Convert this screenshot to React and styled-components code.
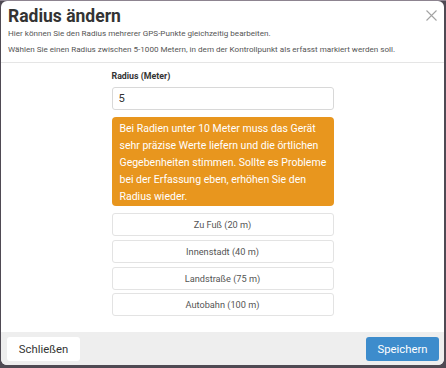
import React from 'react'
import styled, { createGlobalStyle } from 'styled-components'

const GlobalStyle = createGlobalStyle`
  html, body {
    margin: 0;
    padding: 0;
    background: #4f4a53;
  }
  body {
    font-family: Roboto, "Liberation Sans", sans-serif;
  }
`

const Backdrop = styled.div`
  width: 446px;
  height: 368px;
  box-sizing: border-box;
  padding: 1px 2px 3px 1px;
  background: linear-gradient(#8d8490 0 1px, #4f4a53 1px);
`

const Modal = styled.div`
  height: 100%;
  background: #fff;
  border-radius: 6px;
  overflow: hidden;
  display: flex;
  flex-direction: column;
`

const Header = styled.div`
  padding: 5px 7px 7px 7px;
  border-bottom: 1px solid #e5e5e5;
`

const TitleRow = styled.div`
  display: flex;
  justify-content: space-between;
  align-items: flex-start;
`

const Title = styled.h2`
  margin: 0;
  font-size: 17.5px;
  line-height: 21px;
  font-weight: 700;
  color: #333;
`

const Close = styled.button`
  border: 0;
  background: none;
  padding: 4px 0 0;
  color: #a3a3a3;
  cursor: pointer;
  display: flex;
`

const Hint = styled.p`
  margin: ${p => (p.first ? '1px 0 0' : '4px 0 0')};
  font-size: 8.1px;
  line-height: 11.5px;
  color: #555;
`

const Body = styled.div`
  flex: 1;
  display: flex;
  justify-content: center;
  padding-top: 7px;
`

const Column = styled.div`
  width: 222px;
  display: flex;
  flex-direction: column;
`

const Label = styled.label`
  font-size: 8.8px;
  line-height: 12.3px;
  font-weight: 700;
  color: #333;
  margin-bottom: 5px;
`

const Input = styled.input`
  box-sizing: border-box;
  height: 23px;
  border: 1px solid #d8d8d8;
  border-radius: 3px;
  padding: 0 6px;
  font-family: inherit;
  font-size: 11.2px;
  color: #333;
  margin: 0 0 7px;
  outline: none;
`

const Alert = styled.div`
  box-sizing: border-box;
  height: 89px;
  background: #e8961e;
  color: #fff;
  border-radius: 4px;
  padding: 3px 6px 2px 8px;
  font-size: 10.5px;
  line-height: 17px;
  white-space: nowrap;
  margin-bottom: 7px;
`

const Preset = styled.button`
  box-sizing: border-box;
  height: 23px;
  margin-bottom: 3.7px;
  background: #fff;
  border: 1px solid #e3e3e3;
  border-radius: 3px;
  font-family: inherit;
  font-size: 9.2px;
  color: #555;
  cursor: pointer;
`

const Footer = styled.div`
  height: 33px;
  box-sizing: border-box;
  background: #eeeeee;
  padding: 5px 5px 4px 6px;
  display: flex;
  justify-content: space-between;
`

const FooterButton = styled.button`
  height: 24px;
  width: 73px;
  padding: 0;
  border: 0;
  border-radius: 3px;
  font-family: inherit;
  font-size: 11.3px;
  background: ${p => (p.primary ? '#3d8ccc' : '#fff')};
  color: ${p => (p.primary ? '#fff' : '#333')};
  cursor: pointer;
`

const presets = ['Zu Fuß (20 m)', 'Innenstadt (40 m)', 'Landstraße (75 m)', 'Autobahn (100 m)']

const warning = [
  'Bei Radien unter 10 Meter muss das Gerät',
  'sehr präzise Werte liefern und die örtlichen',
  'Gegebenheiten stimmen. Sollte es Probleme',
  'bei der Erfassung eben, erhöhen Sie den',
  'Radius wieder.'
]

export default function App () {
  return (
    <>
      <GlobalStyle />
      <Backdrop>
        <Modal>
          <Header>
            <TitleRow>
              <Title>Radius ändern</Title>
              <Close aria-label='Schließen'>
                <svg width='11' height='11' viewBox='0 0 11 11' fill='none' stroke='currentColor' strokeWidth='1.1'>
                  <path d='M0.5 0.5L10.5 10.5M10.5 0.5L0.5 10.5' />
                </svg>
              </Close>
            </TitleRow>
            <Hint first>Hier können Sie den Radius mehrerer GPS-Punkte gleichzeitig bearbeiten.</Hint>
            <Hint>Wählen Sie einen Radius zwischen 5-1000 Metern, in dem der Kontrollpunkt als erfasst markiert werden soll.</Hint>
          </Header>
          <Body>
            <Column>
              <Label>Radius (Meter)</Label>
              <Input defaultValue='5' />
              <Alert>
                {warning.map((line, i) => (
                  <React.Fragment key={i}>
                    {line}
                    {i < warning.length - 1 && <br />}
                  </React.Fragment>
                ))}
              </Alert>
              {presets.map(p => (
                <Preset key={p}>{p}</Preset>
              ))}
            </Column>
          </Body>
          <Footer>
            <FooterButton>Schließen</FooterButton>
            <FooterButton primary>Speichern</FooterButton>
          </Footer>
        </Modal>
      </Backdrop>
    </>
  )
}
